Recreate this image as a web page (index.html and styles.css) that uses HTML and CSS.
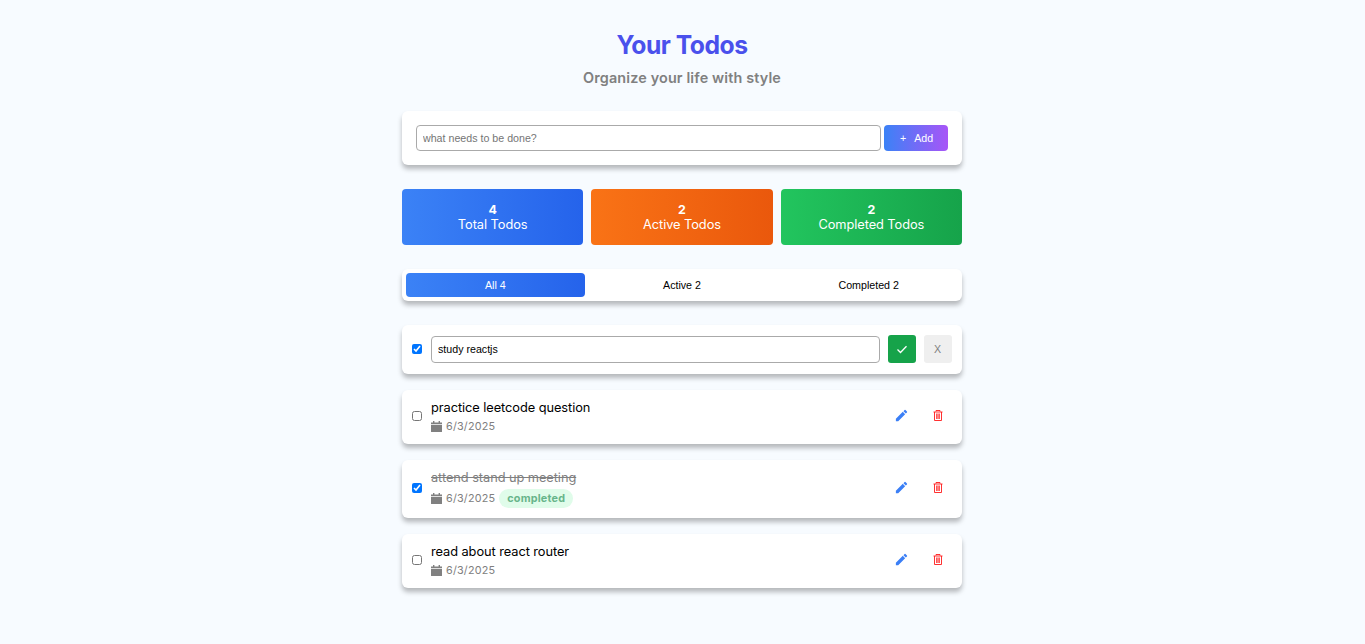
FILE: index.html
```html
<!DOCTYPE html>
<html lang="en">
<head>
<meta charset="utf-8">
<title>Your Todos</title>
<link rel="stylesheet" href="styles.css">
</head>
<body>
<svg class="sprite" width="0" height="0">
  <symbol id="calendar" viewBox="0 0 11 11"><path d="M0 4h11v6.500a.5.5 0 0 1-.5.5H.500a.5.5 0 0 1-.5-.5zM0 3.200V1.500h2V0h1.400v1.500h4.200V0H9v1.500h2v1.700z"/></symbol>
  <symbol id="pencil" viewBox="0 0 24 24"><path d="M3 17.250V21h3.750L17.810 9.940l-3.750-3.750L3 17.250zM20.710 7.040a1 1 0 0 0 0-1.410l-2.340-2.340a1 1 0 0 0-1.410 0l-1.830 1.830 3.750 3.750 1.830-1.830z"/></symbol>
  <symbol id="trash" viewBox="0 0 10 11"><path d="M3 1.500V.500h4v1M.500 2h9M1.500 2v8.500h7V2M3.700 3.500v5.500M5 3.500v5.500M6.300 3.500v5.500"/></symbol>
</svg>
<main class="page">
  <header class="header">
    <h1 class="title">Your Todos</h1>
    <p class="subtitle">Organize your life with style</p>
  </header>
  <form class="card add-form">
    <input class="field add-field" type="text" placeholder="what needs to be done?">
    <button class="add-button" type="button"><span>+</span><span>Add</span></button>
  </form>
  <section class="stats">
    <div class="stat stat-total"><b>4</b><span>Total Todos</span></div>
    <div class="stat stat-active"><b>2</b><span>Active Todos</span></div>
    <div class="stat stat-completed"><b>2</b><span>Completed Todos</span></div>
  </section>
  <nav class="card tabs">
    <button class="tab tab-selected" type="button">All 4</button>
    <button class="tab" type="button">Active 2</button>
    <button class="tab" type="button">Completed 2</button>
  </nav>
  <section class="list">
    <article class="card todo todo-editing">
      <input class="check" type="checkbox" checked>
      <input class="field edit-field" type="text" value="study reactjs">
      <button class="square save" type="button"><svg class="tick" viewBox="0 0 12 12"><path d="M1.500 6.500l3 3 6-6.300"/></svg></button>
      <button class="square cancel" type="button">X</button>
    </article>
    <article class="card todo">
      <input class="check" type="checkbox">
      <div class="details">
        <div class="name">practice leetcode question</div>
        <div class="meta"><svg class="calendar"><use href="#calendar"/></svg><span>6/3/2025</span></div>
      </div>
      <button class="square edit" type="button"><svg class="icon"><use href="#pencil"/></svg></button>
      <button class="square delete" type="button"><svg class="trash"><use href="#trash"/></svg></button>
    </article>
    <article class="card todo todo-done">
      <input class="check" type="checkbox" checked>
      <div class="details">
        <div class="name name-done">attend stand up meeting</div>
        <div class="meta"><svg class="calendar"><use href="#calendar"/></svg><span>6/3/2025</span><span class="badge">completed</span></div>
      </div>
      <button class="square edit" type="button"><svg class="icon"><use href="#pencil"/></svg></button>
      <button class="square delete" type="button"><svg class="trash"><use href="#trash"/></svg></button>
    </article>
    <article class="card todo">
      <input class="check" type="checkbox">
      <div class="details">
        <div class="name">read about react router</div>
        <div class="meta"><svg class="calendar"><use href="#calendar"/></svg><span>6/3/2025</span></div>
      </div>
      <button class="square edit" type="button"><svg class="icon"><use href="#pencil"/></svg></button>
      <button class="square delete" type="button"><svg class="trash"><use href="#trash"/></svg></button>
    </article>
  </section>
</main>
</body>
</html>
```
FILE: styles.css
```css
* { box-sizing: border-box; }
body {
  margin: 0;
  min-height: 644px;
  background: #f7fbff;
  font-family: Inter, sans-serif;
  font-size: 12.8px;
  letter-spacing: -.06px;
  color: #000;
}
.sprite { position: absolute; }
.page {
  width: 560px;
  margin-left: 402px;
  padding-top: 29px;
}
.header { height: 82px; text-align: center; }
.title {
  margin: 0;
  font-size: 25.6px;
  line-height: 31px;
  font-weight: 700;
  letter-spacing: -.5px;
  transform: scaleX(.965);
  color: #4a50ec;
}
.subtitle {
  margin: 9px 0 0;
  font-size: 14.4px;
  line-height: 18px;
  font-weight: 600;
  letter-spacing: .14px;
  color: gray;
}
.card {
  background: #fff;
  border-radius: 6px;
  box-shadow: 0 4px 5px rgba(0, 0, 0, .27);
}
button, .field {
  font-family: "Liberation Sans", Arial, sans-serif;
  font-size: 10.667px;
}
button { border: 0; padding: 0; }
.field {
  border: 1px solid #aaa;
  border-radius: 4px;
  padding: 0 6px;
  outline: 0;
  background: #fff;
  color: #000;
  min-width: 0;
}
.add-form {
  display: flex;
  gap: 3px;
  height: 54px;
  padding: 14px;
}
.add-field { flex: 1; height: 26px; }
.add-button {
  display: flex;
  align-items: center;
  justify-content: center;
  gap: 8px;
  width: 64px;
  height: 26px;
  padding-left: 1px;
  border-radius: 4px;
  color: #fff;
  background: linear-gradient(to right, #3b82f6, #a855f7);
}
.stats {
  display: grid;
  grid-template-columns: repeat(3, 1fr);
  gap: 8px;
  margin-top: 24px;
}
.stat {
  display: flex;
  flex-direction: column;
  height: 56px;
  padding-top: 13px;
  border-radius: 4px;
  line-height: 15px;
  text-align: center;
  color: #fff;
}
.stat b { font-size: 12.4px; }
.stat-total, .tab-selected { background: linear-gradient(to right, #3b82f6, #2563eb); }
.stat-active { background: linear-gradient(to right, #f97316, #ea580c); }
.stat-completed { background: linear-gradient(to right, #22c55e, #16a34a); }
.tabs {
  display: grid;
  grid-template-columns: repeat(3, 1fr);
  gap: 8px;
  height: 32px;
  margin-top: 24px;
  padding: 4px;
}
.tab { border-radius: 4px; background-color: transparent; color: #000; }
.tab-selected { color: #fff; }
.list {
  display: flex;
  flex-direction: column;
  gap: 16px;
  margin-top: 24px;
}
.todo {
  display: flex;
  align-items: center;
  gap: 8px;
  height: 54px;
  padding: 0 10px 2px;
}
.todo-editing { height: 49px; padding-bottom: 1px; }
.todo-done { height: 58px; }
.check { width: 10.4px; height: 10.4px; margin: 0 .6px 0 0; flex: none; }
.edit-field { flex: 1; height: 27px; }
.details { flex: 1; padding-top: 1px; }
.name { line-height: 15px; }
.name-done { color: gray; text-decoration: line-through; }
.meta {
  display: flex;
  align-items: center;
  gap: 4px;
  height: 15px;
  margin-top: 4px;
  font-size: 10.8px;
  letter-spacing: .2px;
  color: gray;
}
.todo-done .meta { height: 19px; }
.calendar { width: 11px; height: 11px; fill: gray; }
.badge {
  padding: 0 8px;
  border-radius: 10px;
  line-height: 19px;
  font-weight: 700;
  letter-spacing: .2px;
  color: #68b58b;
  background: #e0fcea;
}
.square {
  display: flex;
  align-items: center;
  justify-content: center;
  width: 28px;
  height: 28px;
  border-radius: 3px;
  background: transparent;
}
.save { background: #16a34a; padding-right: 1px; }
.cancel { background: #efefef; color: gray; padding-right: 1px; }
.edit, .delete { padding: 0 1px 1px 0; }
.tick { width: 12px; height: 12px; fill: none; stroke: #fff; stroke-width: 1.3; }
.icon { width: 15px; height: 15px; fill: #3b7ff6; }
.trash { width: 10px; height: 11px; fill: none; stroke: #ff1a1a; stroke-width: .9; }
```
